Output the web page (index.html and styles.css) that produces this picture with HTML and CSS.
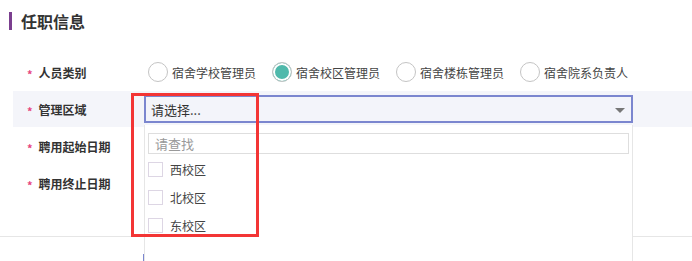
FILE: index.html
```html
<!DOCTYPE html>
<html lang="zh-CN">
<head>
    <meta charset="UTF-8">
    <title>任职信息</title>
    <link rel="stylesheet" href="styles.css">
</head>
<body>

    <h2 class="section-title">任职信息</h2>

    <div class="form">
        <!-- 人员类别 -->
        <div class="form-row">
            <label class="form-label"><span class="req">*</span>人员类别</label>
            <div class="form-field radios">
                <span class="radio"><i class="radio-dot"></i>宿舍学校管理员</span>
                <span class="radio"><i class="radio-dot checked"></i>宿舍校区管理员</span>
                <span class="radio"><i class="radio-dot"></i>宿舍楼栋管理员</span>
                <span class="radio"><i class="radio-dot"></i>宿舍院系负责人</span>
            </div>
        </div>

        <!-- 管理区域 -->
        <div class="form-row active">
            <label class="form-label"><span class="req">*</span>管理区域</label>
            <div class="form-field">
                <div class="select">
                    <span>请选择...</span>
                    <i class="caret"></i>
                </div>
                <div class="dropdown">
                    <input type="text" class="search" placeholder="请查找">
                    <ul class="options">
                        <li><i class="check"></i>西校区</li>
                        <li><i class="check"></i>北校区</li>
                        <li><i class="check"></i>东校区</li>
                    </ul>
                </div>
                <div class="highlight"></div>
            </div>
        </div>

        <div class="form-row">
            <label class="form-label"><span class="req">*</span>聘用起始日期</label>
        </div>

        <div class="form-row">
            <label class="form-label"><span class="req">*</span>聘用终止日期</label>
        </div>
    </div>

    <div class="form-footer">
        <div class="next-input"></div>
    </div>

</body>
</html>
```

FILE: styles.css
```css
body {
    font-family: "Noto Sans CJK SC", "Noto Sans", Arial, sans-serif;
    margin: 0;
    padding: 0;
    background-color: #fff;
    color: #333;
    width: 692px;
    height: 261px;
    overflow: hidden;
}
.section-title {
    margin: 12px 0 0 9px;
    padding-left: 9px;
    border-left: 3px solid #7b3f8f;
    font-size: 16px;
    font-weight: 600;
    line-height: 18px;
    height: 18px;
}
.form {
    margin: 24px 0 0 13px;
}
.form-row {
    display: flex;
    align-items: center;
    height: 36px;
    margin-bottom: 1px;
}
.form-row.active {
    background-color: #f4f5fa;
}
.form-label {
    width: 131px;
    flex-shrink: 0;
    font-size: 12px;
    font-weight: 600;
    color: #333;
    display: flex;
    align-items: center;
}
.req {
    color: #e6457e;
    font-size: 11px;
    margin: 0 6px 0 14px;
    line-height: 1;
    position: relative;
    top: 2px;
}
.form-field {
    flex: 1;
    position: relative;
}
.radios {
    display: flex;
    align-items: center;
    padding-left: 4px;
}
.radio {
    display: flex;
    align-items: center;
    font-size: 12px;
    color: #444;
    margin-right: 16px;
}
.radio-dot {
    box-sizing: border-box;
    width: 20px;
    height: 20px;
    border: 1px solid #c4c4c4;
    border-radius: 50%;
    margin-right: 4px;
    display: inline-block;
}
.radio-dot.checked {
    background-color: #4fb9ab;
    box-shadow: inset 0 0 0 2px #fff;
}
.select {
    box-sizing: border-box;
    width: 489px;
    height: 28px;
    border: 2px solid #7b86cf;
    background-color: #f3f4fa;
    display: flex;
    align-items: center;
    justify-content: space-between;
    padding: 0 6px 0 5px;
    font-size: 13px;
    color: #333;
}
.caret {
    width: 0;
    height: 0;
    border-left: 5px solid transparent;
    border-right: 5px solid transparent;
    border-top: 5px solid #777;
    margin-top: 2px;
}
.dropdown {
    position: absolute;
    left: 0;
    top: 30px;
    width: 489px;
    height: 140px;
    box-sizing: border-box;
    background-color: #fff;
    border-left: 1px solid #e6e6e6;
    border-right: 1px solid #e6e6e6;
    padding: 5px 3px 0 3px;
    z-index: 2;
}
.search {
    box-sizing: border-box;
    width: 100%;
    height: 21px;
    border: 1px solid #dedede;
    padding: 0 6px;
    font-family: inherit;
    font-size: 13px;
    outline: none;
}
.search::placeholder {
    color: #999;
}
.options {
    list-style: none;
    margin: 0;
    padding: 1px 0 0 0;
}
.options li {
    display: flex;
    align-items: center;
    height: 28px;
    font-size: 12px;
    color: #444;
}
.check {
    box-sizing: border-box;
    width: 15px;
    height: 15px;
    border: 1px solid #ddd6e4;
    margin-right: 7px;
    display: inline-block;
}
.highlight {
    position: absolute;
    left: -13px;
    top: -2px;
    width: 122px;
    height: 138px;
    border: 3px solid #f33535;
    z-index: 3;
}
.form-footer {
    margin-top: 35px;
    border-top: 1px solid #e6e6e6;
    padding: 17px 0 0 143px;
}
.next-input {
    width: 60px;
    height: 20px;
    border-left: 2px solid #7b86cf;
}
```
